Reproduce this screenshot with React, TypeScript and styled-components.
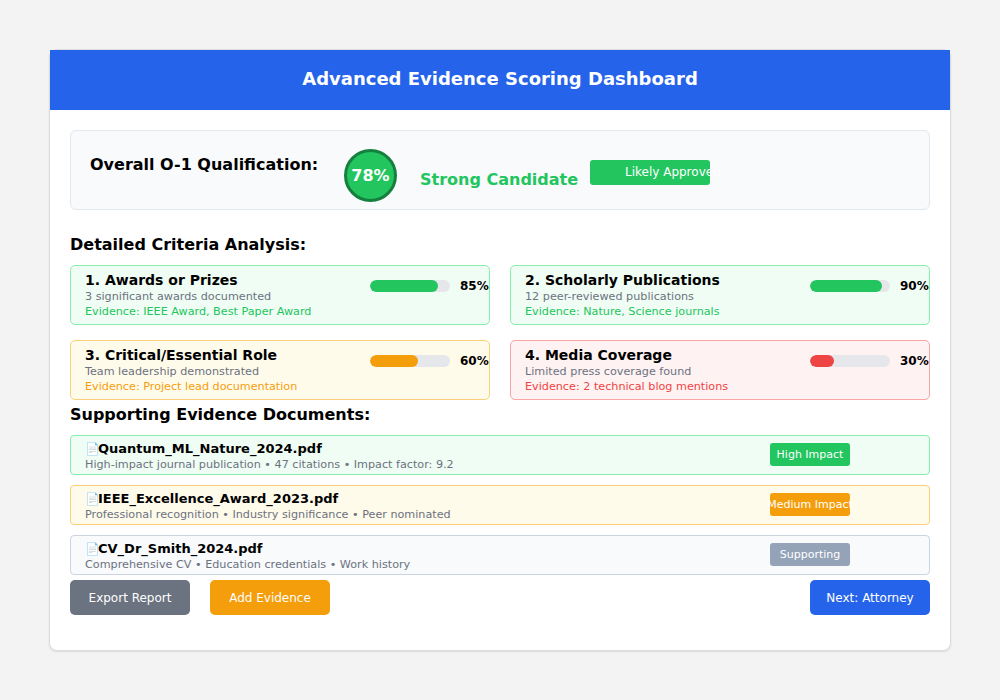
import React from "react";
import styled, { createGlobalStyle } from "styled-components";

const Global = createGlobalStyle`
  html, body { margin: 0; padding: 0; }
  body {
    background: #f3f3f3;
    font-family: "DejaVu Sans", "Noto Sans", sans-serif;
    width: 1000px;
    height: 700px;
    overflow: hidden;
  }
`;

const Page = styled.div`
  padding: 49px 49px 0 49px;
`;

const Card = styled.div`
  width: 902px;
  height: 602px;
  box-sizing: border-box;
  background: #ffffff;
  border: 1px solid #dcdcdc;
  border-radius: 8px;
  box-shadow: 0 1px 2px rgba(0, 0, 0, 0.1);
  display: flex;
  flex-direction: column;
`;

const Header = styled.header`
  height: 60px;
  background: #2563eb;
  color: #ffffff;
  display: flex;
  align-items: center;
  justify-content: center;
  font-size: 18px;
  font-weight: bold;
  padding-bottom: 3px;
  box-sizing: border-box;
`;

const Body = styled.div`
  padding: 20px 20px 0 20px;
  display: flex;
  flex-direction: column;
`;

const Summary = styled.div`
  height: 80px;
  box-sizing: border-box;
  background: #f8fafc;
  border: 1px solid #e2e8f0;
  border-radius: 6px;
  display: flex;
  align-items: flex-start;
  padding-left: 19px;
`;

const SummaryTitle = styled.div`
  width: 254px;
  margin-top: 24px;
  font-size: 16px;
  line-height: 20px;
  font-weight: bold;
  color: #000;
`;

const ScoreCircle = styled.div`
  width: 53px;
  height: 53px;
  box-sizing: border-box;
  margin-top: 18px;
  border-radius: 50%;
  background: #22c55e;
  border: 3px solid #15803d;
  color: #ffffff;
  font-size: 16px;
  font-weight: bold;
  display: flex;
  align-items: center;
  justify-content: center;
`;

const Verdict = styled.div`
  margin-left: 23px;
  margin-top: 39px;
  width: 170px;
  font-size: 16px;
  line-height: 20px;
  font-weight: bold;
  color: #22c55e;
`;

const Approval = styled.div`
  width: 120px;
  height: 25px;
  box-sizing: border-box;
  margin-top: 29px;
  border-radius: 3px;
  background: #22c55e;
  color: #ffffff;
  font-size: 12px;
  line-height: 25px;
  padding-left: 35px;
  white-space: nowrap;
  overflow: visible;
`;

const SectionTitle = styled.h2<{ $top: number }>`
  margin: ${(p) => p.$top}px 0 0 0;
  font-size: 16px;
  line-height: 20px;
  font-weight: bold;
  color: #000;
`;

const CriteriaGrid = styled.div`
  margin-top: 10px;
  display: grid;
  grid-template-columns: 420px 420px;
  column-gap: 20px;
  row-gap: 15px;
`;

type Tone = "green" | "orange" | "red" | "gray";

const toneBg: Record<Tone, string> = {
  green: "#f0fdf4",
  orange: "#fffbeb",
  red: "#fef2f2",
  gray: "#f8fafc",
};
const toneBorder: Record<Tone, string> = {
  green: "#86efac",
  orange: "#fcd07a",
  red: "#fca5a5",
  gray: "#cbd5e1",
};
const toneStrong: Record<Tone, string> = {
  green: "#22c55e",
  orange: "#f59e0b",
  red: "#ef4444",
  gray: "#94a3b8",
};

const CriterionCard = styled.div<{ $tone: Tone }>`
  height: 60px;
  box-sizing: border-box;
  background: ${(p) => toneBg[p.$tone]};
  border: 1px solid ${(p) => toneBorder[p.$tone]};
  border-radius: 5px;
  display: flex;
  align-items: flex-start;
  padding-left: 14px;
`;

const CriterionText = styled.div`
  width: 285px;
  display: flex;
  flex-direction: column;
  padding-top: 6px;
`;

const CriterionTitle = styled.div`
  font-size: 14px;
  line-height: 17px;
  font-weight: bold;
  color: #000;
`;

const SmallLine = styled.div<{ $color: string }>`
  font-size: 11.2px;
  line-height: 15px;
  color: ${(p) => p.$color};
  white-space: nowrap;
`;

const BarTrack = styled.div`
  width: 80px;
  height: 12px;
  margin-top: 14px;
  border-radius: 6px;
  background: #e5e7eb;
  overflow: hidden;
  flex-shrink: 0;
`;

const BarFill = styled.div<{ $tone: Tone }>`
  height: 100%;
  border-radius: 6px;
  background: ${(p) => toneStrong[p.$tone]};
`;

const Pct = styled.div`
  margin-left: 10px;
  margin-top: 12px;
  font-size: 12px;
  line-height: 16px;
  font-weight: bold;
  color: #000;
  white-space: nowrap;
`;

const DocList = styled.div`
  margin-top: 10px;
  display: flex;
  flex-direction: column;
  gap: 10px;
`;

const DocRow = styled.div<{ $tone: Tone }>`
  height: 40px;
  box-sizing: border-box;
  background: ${(p) => toneBg[p.$tone]};
  border: 1px solid ${(p) => toneBorder[p.$tone]};
  border-radius: 4px;
  display: flex;
  align-items: flex-start;
  padding-left: 14px;
`;

const DocText = styled.div`
  flex: 1;
  display: flex;
  flex-direction: column;
  padding-top: 5px;
`;

const DocTitle = styled.div`
  font-size: 13px;
  line-height: 16px;
  font-weight: bold;
  color: #000;
  display: flex;
  align-items: center;
`;

const DocIcon = styled.span`
  font-size: 12px;
  width: 13px;
  display: inline-block;
`;

const ImpactBadge = styled.div<{ $tone: Tone }>`
  width: 80px;
  height: 23px;
  margin-top: 7px;
  margin-right: 79px;
  border-radius: 3px;
  background: ${(p) => toneStrong[p.$tone]};
  color: #ffffff;
  font-size: 11px;
  display: flex;
  align-items: center;
  justify-content: center;
  white-space: nowrap;
  flex-shrink: 0;
`;

const Actions = styled.div`
  margin-top: 5px;
  display: flex;
  gap: 20px;
`;

const ActionButton = styled.button<{ $color: string; $push?: boolean }>`
  width: 120px;
  height: 35px;
  border: none;
  border-radius: 5px;
  background: ${(p) => p.$color};
  color: #ffffff;
  font-family: inherit;
  font-size: 12px;
  padding: 0;
  margin-left: ${(p) => (p.$push ? "auto" : "0")};
  cursor: pointer;
`;

const criteria: {
  title: string;
  sub: string;
  evidence: string;
  pct: number;
  tone: Tone;
}[] = [
  {
    title: "1. Awards or Prizes",
    sub: "3 significant awards documented",
    evidence: "Evidence: IEEE Award, Best Paper Award",
    pct: 85,
    tone: "green",
  },
  {
    title: "2. Scholarly Publications",
    sub: "12 peer-reviewed publications",
    evidence: "Evidence: Nature, Science journals",
    pct: 90,
    tone: "green",
  },
  {
    title: "3. Critical/Essential Role",
    sub: "Team leadership demonstrated",
    evidence: "Evidence: Project lead documentation",
    pct: 60,
    tone: "orange",
  },
  {
    title: "4. Media Coverage",
    sub: "Limited press coverage found",
    evidence: "Evidence: 2 technical blog mentions",
    pct: 30,
    tone: "red",
  },
];

const docs: { name: string; sub: string; badge: string; tone: Tone }[] = [
  {
    name: "Quantum_ML_Nature_2024.pdf",
    sub: "High-impact journal publication • 47 citations • Impact factor: 9.2",
    badge: "High Impact",
    tone: "green",
  },
  {
    name: "IEEE_Excellence_Award_2023.pdf",
    sub: "Professional recognition • Industry significance • Peer nominated",
    badge: "Medium Impact",
    tone: "orange",
  },
  {
    name: "CV_Dr_Smith_2024.pdf",
    sub: "Comprehensive CV • Education credentials • Work history",
    badge: "Supporting",
    tone: "gray",
  },
];

export default function App() {
  return (
    <>
      <Global />
      <Page>
        <Card>
          <Header>Advanced Evidence Scoring Dashboard</Header>
          <Body>
            <Summary>
              <SummaryTitle>Overall O-1 Qualification:</SummaryTitle>
              <ScoreCircle>78%</ScoreCircle>
              <Verdict>Strong Candidate</Verdict>
              <Approval>Likely Approved</Approval>
            </Summary>

            <SectionTitle $top={25}>Detailed Criteria Analysis:</SectionTitle>
            <CriteriaGrid>
              {criteria.map((c) => (
                <CriterionCard key={c.title} $tone={c.tone}>
                  <CriterionText>
                    <CriterionTitle>{c.title}</CriterionTitle>
                    <SmallLine $color="#6b7280">{c.sub}</SmallLine>
                    <SmallLine $color={toneStrong[c.tone]}>{c.evidence}</SmallLine>
                  </CriterionText>
                  <BarTrack>
                    <BarFill $tone={c.tone} style={{ width: `${c.pct}%` }} />
                  </BarTrack>
                  <Pct>{c.pct}%</Pct>
                </CriterionCard>
              ))}
            </CriteriaGrid>

            <SectionTitle $top={5}>Supporting Evidence Documents:</SectionTitle>
            <DocList>
              {docs.map((d) => (
                <DocRow key={d.name} $tone={d.tone}>
                  <DocText>
                    <DocTitle>
                      <DocIcon>📄</DocIcon>
                      {d.name}
                    </DocTitle>
                    <SmallLine $color="#6b7280">{d.sub}</SmallLine>
                  </DocText>
                  <ImpactBadge $tone={d.tone}>{d.badge}</ImpactBadge>
                </DocRow>
              ))}
            </DocList>

            <Actions>
              <ActionButton $color="#6b7280">Export Report</ActionButton>
              <ActionButton $color="#f59e0b">Add Evidence</ActionButton>
              <ActionButton $color="#2563eb" $push>
                Next: Attorney
              </ActionButton>
            </Actions>
          </Body>
        </Card>
      </Page>
    </>
  );
}
